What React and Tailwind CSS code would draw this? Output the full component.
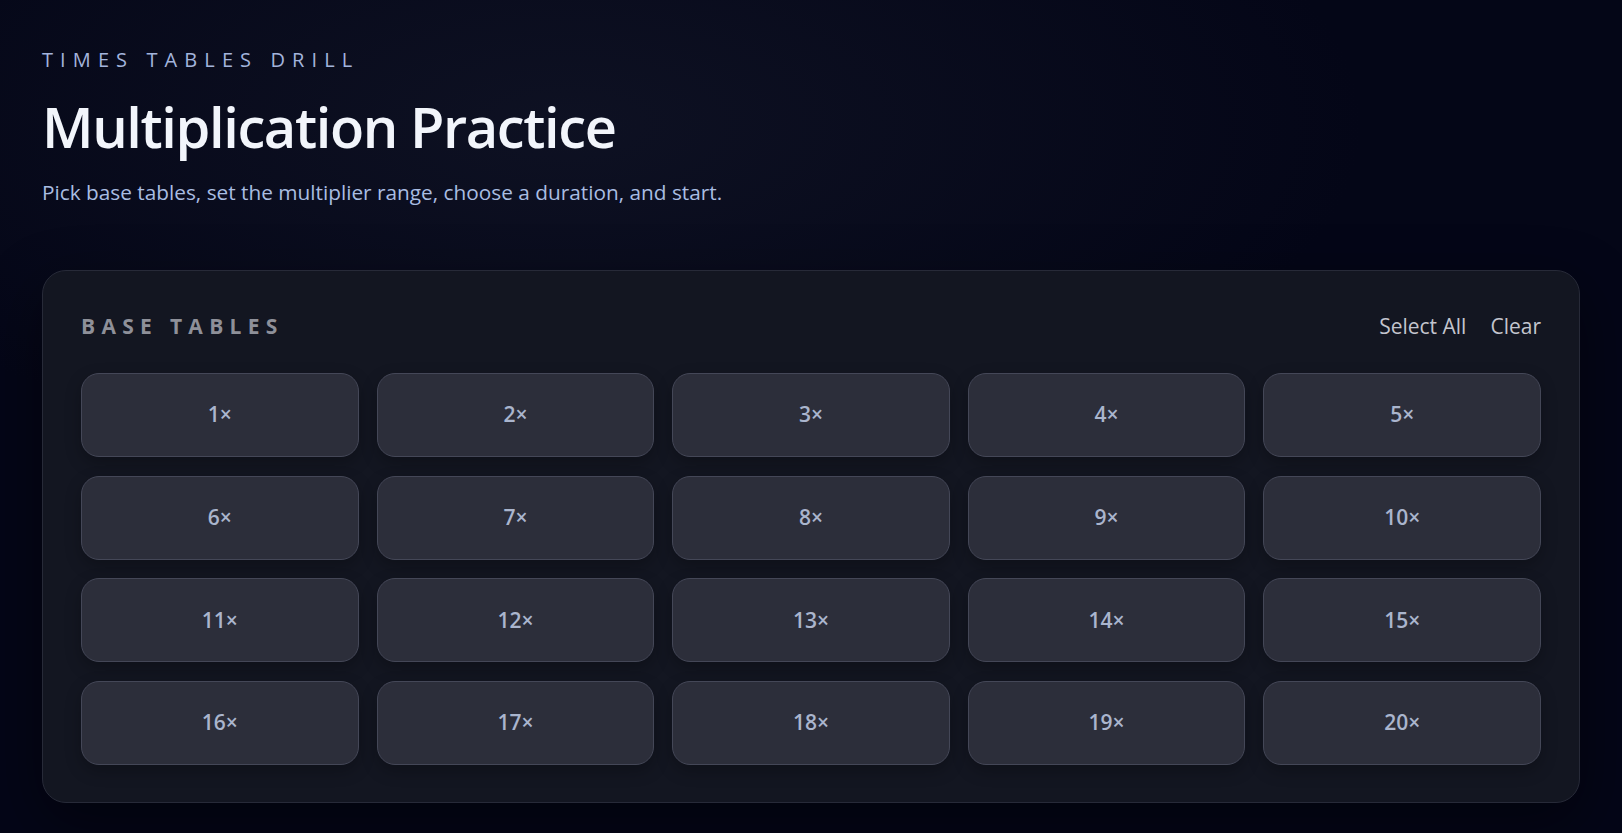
import React from "react";

const tables = Array.from({ length: 20 }, (_, i) => i + 1);

export default function App() {
  return (
    <div
      className="min-h-screen w-full bg-[#040617] px-[42px] pt-[48px] pb-[30px]"
      style={{
        fontFamily: '"Open Sans", "Noto Sans", "Liberation Sans", sans-serif',
        backgroundImage:
          "radial-gradient(ellipse 70% 60% at 35% 15%, rgba(22,26,44,0.55), rgba(4,6,23,0) 70%)",
      }}
    >
      <div className="text-[20px] leading-[24px] tracking-[0.355em] text-[#a3b4dc] font-normal uppercase">
        Times Tables Drill
      </div>
      <h1 className="mt-[22px] text-[56px] leading-[64px] font-semibold tracking-[-0.025em] text-[#f2f5fb]">
        Multiplication Practice
      </h1>
      <p className="mt-[20px] text-[20.8px] leading-[28px] text-[#a9bde2]">
        Pick base tables, set the multiplier range, choose a duration, and start.
      </p>

      <section className="mt-[64px] rounded-[24px] border border-[#272a38] bg-[#131621] px-[38px] pt-[40px] pb-[37px] shadow-[0_20px_60px_rgba(0,0,0,0.45)]">
        <div className="flex items-center justify-between">
          <h2 className="text-[21px] leading-[30px] font-bold tracking-[0.3em] text-[#8e9099] uppercase">
            Base Tables
          </h2>
          <div className="flex items-center gap-[24px] text-[21px] leading-[30px] text-[#c3c5ce]">
            <button type="button">Select All</button>
            <button type="button">Clear</button>
          </div>
        </div>
        <div className="mt-[32px] grid grid-cols-5 gap-x-[18px] gap-y-[18.7px]">
          {tables.map((n) => (
            <button
              key={n}
              type="button"
              className="flex h-[84px] items-center justify-center rounded-[18px] border border-[#444757] bg-[#2c2e3a] text-[21px] font-semibold text-[#aab5cd] shadow-[0_6px_16px_rgba(0,0,0,0.25)]"
            >
              {n}×
            </button>
          ))}
        </div>
      </section>
    </div>
  );
}
